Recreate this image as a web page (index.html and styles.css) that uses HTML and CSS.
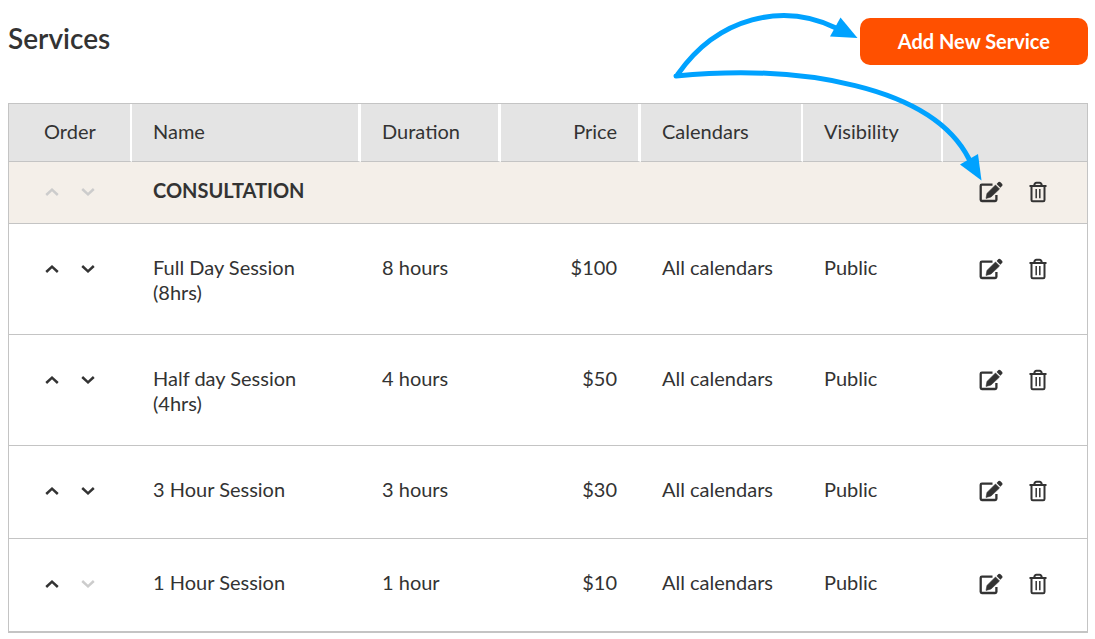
FILE: index.html
```
<!DOCTYPE html>
<html lang="en">
<head>
    <meta charset="UTF-8">
    <meta name="viewport" content="width=device-width, initial-scale=1">
    <title>Services</title>
    <link rel="stylesheet" href="styles.css">
</head>
<body>

<!-- icons used in the table rows -->
<svg class="icon-defs" aria-hidden="true">
    <symbol id="up" viewBox="0 0 14 8">
        <path d="M1.2 7 L7 1.7 L12.8 7" fill="none" stroke="currentColor" stroke-width="2.5"/>
    </symbol>
    <symbol id="down" viewBox="0 0 14 8">
        <path d="M1.2 1 L7 6.3 L12.8 1" fill="none" stroke="currentColor" stroke-width="2.5"/>
    </symbol>
    <symbol id="edit" viewBox="0 0 24 22">
        <path d="M13.5 3.6 H2.9 Q1.7 3.6 1.7 4.8 V18.8 Q1.7 20 2.9 20 H16.2 Q17.4 20 17.4 18.8 V14" fill="none" stroke="currentColor" stroke-width="2.3"/>
        <path d="M7 17.4 L8 12.4 L16.5 4 L20.5 8 L12 16 Z" fill="currentColor" stroke="currentColor" stroke-width=".6" stroke-linejoin="round"/>
        <path d="M17.6 3 L19.5 1.1 Q20.5 .3 21.5 1.2 L23.2 2.9 Q24 3.9 23.2 4.8 L21.4 6.7 Z" fill="currentColor"/>
    </symbol>
    <symbol id="trash" viewBox="0 0 18 22">
        <path d="M.5 5 H17.5 M2.5 5 V19 Q2.5 20.3 3.8 20.3 H14.2 Q15.5 20.3 15.5 19 V5 M5.2 4.6 Q5.6 1.7 7.4 1.7 H10.6 Q12.4 1.7 12.8 4.6" fill="none" stroke="currentColor" stroke-width="2"/>
        <path d="M7.2 8 V17.2 M10.8 8 V17.2" fill="none" stroke="currentColor" stroke-width="1.5"/>
    </symbol>
</svg>

<header class="page-header">
    <h1 class="title">Services</h1>
    <button class="add-button" type="button">Add New Service</button>
</header>

<table class="services">
    <colgroup>
        <col class="col-order">
        <col class="col-name">
        <col class="col-duration">
        <col class="col-price">
        <col class="col-calendars">
        <col class="col-visibility">
        <col class="col-actions">
    </colgroup>
    <thead>
        <tr>
            <th class="order">Order</th>
            <th>Name</th>
            <th>Duration</th>
            <th class="price">Price</th>
            <th class="calendars">Calendars</th>
            <th class="visibility">Visibility</th>
            <th class="actions"></th>
        </tr>
    </thead>
    <tbody>
        <tr class="category">
            <td class="order">
                <div class="buttons">
                    <button class="move" type="button" aria-label="Move up" disabled><svg><use href="#up"/></svg></button>
                    <button class="move" type="button" aria-label="Move down" disabled><svg><use href="#down"/></svg></button>
                </div>
            </td>
            <td colspan="5">CONSULTATION</td>
            <td class="actions">
                <div class="buttons">
                    <button class="edit" type="button" aria-label="Edit"><svg><use href="#edit"/></svg></button>
                    <button class="delete" type="button" aria-label="Delete"><svg><use href="#trash"/></svg></button>
                </div>
            </td>
        </tr>
        <tr>
            <td class="order">
                <div class="buttons">
                    <button class="move" type="button" aria-label="Move up"><svg><use href="#up"/></svg></button>
                    <button class="move" type="button" aria-label="Move down"><svg><use href="#down"/></svg></button>
                </div>
            </td>
            <td>Full Day Session (8hrs)</td>
            <td>8 hours</td>
            <td class="price">$100</td>
            <td>All calendars</td>
            <td>Public</td>
            <td class="actions">
                <div class="buttons">
                    <button class="edit" type="button" aria-label="Edit"><svg><use href="#edit"/></svg></button>
                    <button class="delete" type="button" aria-label="Delete"><svg><use href="#trash"/></svg></button>
                </div>
            </td>
        </tr>
        <tr>
            <td class="order">
                <div class="buttons">
                    <button class="move" type="button" aria-label="Move up"><svg><use href="#up"/></svg></button>
                    <button class="move" type="button" aria-label="Move down"><svg><use href="#down"/></svg></button>
                </div>
            </td>
            <td>Half day Session (4hrs)</td>
            <td>4 hours</td>
            <td class="price">$50</td>
            <td>All calendars</td>
            <td>Public</td>
            <td class="actions">
                <div class="buttons">
                    <button class="edit" type="button" aria-label="Edit"><svg><use href="#edit"/></svg></button>
                    <button class="delete" type="button" aria-label="Delete"><svg><use href="#trash"/></svg></button>
                </div>
            </td>
        </tr>
        <tr>
            <td class="order">
                <div class="buttons">
                    <button class="move" type="button" aria-label="Move up"><svg><use href="#up"/></svg></button>
                    <button class="move" type="button" aria-label="Move down"><svg><use href="#down"/></svg></button>
                </div>
            </td>
            <td>3 Hour Session</td>
            <td>3 hours</td>
            <td class="price">$30</td>
            <td>All calendars</td>
            <td>Public</td>
            <td class="actions">
                <div class="buttons">
                    <button class="edit" type="button" aria-label="Edit"><svg><use href="#edit"/></svg></button>
                    <button class="delete" type="button" aria-label="Delete"><svg><use href="#trash"/></svg></button>
                </div>
            </td>
        </tr>
        <tr>
            <td class="order">
                <div class="buttons">
                    <button class="move" type="button" aria-label="Move up"><svg><use href="#up"/></svg></button>
                    <button class="move" type="button" aria-label="Move down" disabled><svg><use href="#down"/></svg></button>
                </div>
            </td>
            <td>1 Hour Session</td>
            <td>1 hour</td>
            <td class="price">$10</td>
            <td>All calendars</td>
            <td>Public</td>
            <td class="actions">
                <div class="buttons">
                    <button class="edit" type="button" aria-label="Edit"><svg><use href="#edit"/></svg></button>
                    <button class="delete" type="button" aria-label="Delete"><svg><use href="#trash"/></svg></button>
                </div>
            </td>
        </tr>
    </tbody>
</table>

<!-- arrows to the add button and the first edit icon -->
<svg class="arrows" viewBox="670 0 320 190" aria-hidden="true">
    <path class="line" d="M678 74 C718 17 783 2 836 28"/>
    <path class="head" d="M840.5 17.500 L830 36.500 L857.5 38 Z"/>
    <path class="line" d="M676 76 C800 64 932 86 969 159"/>
    <path class="head" d="M960 164.500 L978 154 L981.5 180.5 Z"/>
</svg>

</body>
</html>
```

FILE: styles.css
```
* {
    box-sizing: border-box;
}

body {
    position: relative;
    margin: 0;
    padding: 18px 7px 6px 8px;
    background: #fff;
    color: #333;
    font-family: Lato, "Open Sans", sans-serif;
    font-size: 20px;
    line-height: 25px;
}

.icon-defs {
    display: none;
}

.page-header {
    display: flex;
    justify-content: space-between;
    align-items: center;
    margin-bottom: 38px;
}

.title {
    margin: 0;
    padding-bottom: 7px;
    font-size: 28px;
    font-weight: 600;
    line-height: 36px;
}

.add-button {
    padding: 11px 38px;
    background: #ff5000;
    border: none;
    border-radius: 10px;
    color: #fff;
    font: inherit;
    font-weight: 700;
    cursor: pointer;
}

/* Table */
.services {
    width: 100%;
    table-layout: fixed;
    border: 1px solid #c4c4c4;
    border-spacing: 0;
}

.col-order {
    width: 123px;
}

.col-duration,
.col-price,
.col-visibility {
    width: 140px;
}

.col-calendars {
    width: 162px;
}

.col-actions {
    width: 144px;
}

th,
td {
    padding: 31px 24px 29px 21px;
    border-bottom: 1px solid #c4c4c4;
    text-align: left;
    vertical-align: top;
}

th {
    padding: 15px 21px 17px;
    background: #e4e4e4;
    border-right: 3px solid #fff;
    font-weight: 400;
}

th.order,
th.calendars,
th.visibility {
    border-right-width: 2px;
}

th.actions {
    border-right: none;
}

.order {
    padding-right: 0;
    padding-left: 35px;
}

td.order {
    padding-left: 36px;
}

.price {
    text-align: right;
}

.category td {
    padding-top: 16px;
    padding-bottom: 13px;
    background: #f4efe9;
    font-weight: 700;
}

/* Row buttons */
.buttons {
    display: flex;
    align-items: center;
    gap: 22px;
    height: 32px;
    padding-bottom: 4px;
}

.buttons button {
    display: flex;
    padding: 0;
    background: none;
    border: none;
    color: #333;
    cursor: pointer;
}

.move svg {
    width: 14px;
    height: 8px;
}

.buttons button:disabled {
    color: #ccc;
    cursor: default;
}

td.actions {
    padding-right: 0;
    padding-left: 36px;
}

.actions .buttons {
    gap: 26px;
}

.edit svg {
    width: 24px;
    height: 22px;
}

.delete svg {
    width: 18px;
    height: 22px;
}

/* Arrows */
.arrows {
    position: absolute;
    top: 0;
    right: 105px;
    width: 320px;
    height: 190px;
    pointer-events: none;
}

.line {
    fill: none;
    stroke: #00a2ff;
    stroke-width: 5;
    stroke-linecap: round;
}

.head {
    fill: #00a2ff;
}
```
